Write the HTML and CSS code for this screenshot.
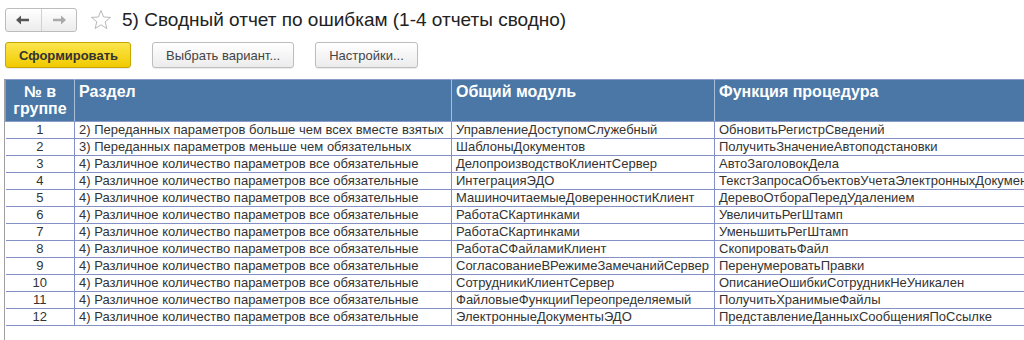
FILE: index.html
```html
<!DOCTYPE html>
<html lang="ru">
  <head>
    <meta charset="UTF-8" />
    <title>Сводный отчет по ошибкам</title>
    <link rel="stylesheet" href="styles.css">
  </head>
  <body>
    <div class="topbar">
      <div class="nav">
        <button class="nav-btn" type="button">
          <svg width="14" height="10" viewBox="0 0 14 10"><path d="M0 5 L5 0.5 L5 3.8 L13 3.8 L13 6.2 L5 6.2 L5 9.5 Z" fill="#555"/></svg>
        </button>
        <button class="nav-btn" type="button">
          <svg width="14" height="10" viewBox="0 0 14 10"><path d="M14 5 L9 0.5 L9 3.8 L1 3.8 L1 6.2 L9 6.2 L9 9.5 Z" fill="#aaa"/></svg>
        </button>
      </div>
      <svg class="star" width="22" height="22" viewBox="0 0 22 22">
        <path d="M11 1.5 L13.6 8 L20.5 8.4 L15.2 12.8 L16.9 19.6 L11 15.8 L5.1 19.6 L6.8 12.8 L1.5 8.4 L8.4 8 Z" fill="#fff" stroke="#b8b8b8" stroke-width="1"/>
      </svg>
      <h1 class="title">5) Сводный отчет по ошибкам (1-4 отчеты сводно)</h1>
    </div>

    <div class="toolbar">
      <button class="btn btn-main" type="button">Сформировать</button>
      <button class="btn" type="button">Выбрать вариант...</button>
      <button class="btn" type="button">Настройки...</button>
    </div>

    <div class="report">
      <table>
        <colgroup>
          <col class="c-num">
          <col class="c-section">
          <col class="c-module">
          <col class="c-func">
        </colgroup>
        <thead>
          <tr>
            <th class="num">№ в группе</th>
            <th>Раздел</th>
            <th>Общий модуль</th>
            <th>Функция процедура</th>
          </tr>
        </thead>
        <tbody>
          <tr><td class="num">1</td><td>2) Переданных параметров больше чем всех вместе взятых</td><td>УправлениеДоступомСлужебный</td><td>ОбновитьРегистрСведений</td></tr>
          <tr><td class="num">2</td><td>3) Переданных параметров меньше чем обязательных</td><td>ШаблоныДокументов</td><td>ПолучитьЗначениеАвтоподстановки</td></tr>
          <tr><td class="num">3</td><td>4) Различное количество параметров все обязательные</td><td>ДелопроизводствоКлиентСервер</td><td>АвтоЗаголовокДела</td></tr>
          <tr><td class="num">4</td><td>4) Различное количество параметров все обязательные</td><td>ИнтеграцияЭДО</td><td>ТекстЗапросаОбъектовУчетаЭлектронныхДокументов</td></tr>
          <tr><td class="num">5</td><td>4) Различное количество параметров все обязательные</td><td>МашиночитаемыеДоверенностиКлиент</td><td>ДеревоОтбораПередУдалением</td></tr>
          <tr><td class="num">6</td><td>4) Различное количество параметров все обязательные</td><td>РаботаСКартинками</td><td>УвеличитьРегШтамп</td></tr>
          <tr><td class="num">7</td><td>4) Различное количество параметров все обязательные</td><td>РаботаСКартинками</td><td>УменьшитьРегШтамп</td></tr>
          <tr><td class="num">8</td><td>4) Различное количество параметров все обязательные</td><td>РаботаСФайламиКлиент</td><td>СкопироватьФайл</td></tr>
          <tr><td class="num">9</td><td>4) Различное количество параметров все обязательные</td><td>СогласованиеВРежимеЗамечанийСервер</td><td>ПеренумероватьПравки</td></tr>
          <tr><td class="num">10</td><td>4) Различное количество параметров все обязательные</td><td>СотрудникиКлиентСервер</td><td>ОписаниеОшибкиСотрудникНеУникален</td></tr>
          <tr><td class="num">11</td><td>4) Различное количество параметров все обязательные</td><td>ФайловыеФункцииПереопределяемый</td><td>ПолучитьХранимыеФайлы</td></tr>
          <tr><td class="num">12</td><td>4) Различное количество параметров все обязательные</td><td>ЭлектронныеДокументыЭДО</td><td>ПредставлениеДанныхСообщенияПоСсылке</td></tr>
        </tbody>
      </table>
    </div>
  </body>
</html>
```

FILE: styles.css
```css
html,
body {
  height: 100%;
}
body {
  margin: 0;
  font-family: "Liberation Sans", Arial, sans-serif;
  color: #333;
  background: #fff;
  overflow: hidden;
}
.topbar {
  display: flex;
  align-items: center;
  padding: 8px 0 0 5px;
  height: 24px;
}
.nav {
  display: flex;
  width: 72px;
  height: 24px;
  box-sizing: border-box;
  border: 1px solid #bcbcbc;
  border-radius: 3px;
  background: linear-gradient(#ffffff, #ececec);
}
.nav-btn {
  flex: 1;
  border: none;
  background: none;
  padding: 0;
  display: flex;
  align-items: center;
  justify-content: center;
}
.nav-btn + .nav-btn {
  border-left: 1px solid #d0d0d0;
}
.star {
  margin-left: 13px;
}
.title {
  margin: 0 0 0 10px;
  font-size: 19px;
  font-weight: normal;
  color: #222;
}
.toolbar {
  display: flex;
  gap: 21px;
  padding: 10px 0 0 5px;
}
.btn {
  height: 26px;
  padding: 0 13px;
  border: 1px solid #bdbdbd;
  border-radius: 3px;
  background: linear-gradient(#ffffff, #ececec);
  font-family: inherit;
  font-size: 13px;
  color: #444;
  box-shadow: 0 1px 1px rgba(0, 0, 0, 0.08);
}
.btn-main {
  width: 126px;
  border-color: #c7a600;
  background: linear-gradient(#fbe54d, #f1cb00);
  font-weight: bold;
  color: #333;
}
.report {
  margin: 11px 0 0 4px;
  height: 262px;
  border-left: 1px solid #a0a0a0;
  overflow: hidden;
}
table {
  width: 1060px;
  border-collapse: collapse;
  table-layout: fixed;
  font-size: 13px;
}
.c-num {
  width: 69px;
}
.c-section {
  width: 377px;
}
.c-module {
  width: 263px;
}
th {
  background: #4a77a5;
  color: #fff;
  font-size: 16px;
  font-weight: bold;
  text-align: left;
  vertical-align: top;
  line-height: 17px;
  height: 42px;
  box-sizing: border-box;
  padding: 3px 4px;
  border: 1px solid #a9bdd6;
  border-top-color: #8a9bc9;
  border-bottom-color: #8a9bc9;
}
th:first-child {
  border-left-color: #8a9bc9;
}
th.num {
  text-align: center;
  padding: 3px 0;
}
td {
  height: 16px;
  padding: 0 4px;
  border: 1px solid #8391c6;
  border-top: none;
  line-height: 16px;
  white-space: nowrap;
  overflow: hidden;
  color: #333;
}
td.num {
  text-align: center;
}
td:first-child {
  border-left: none;
}
```
